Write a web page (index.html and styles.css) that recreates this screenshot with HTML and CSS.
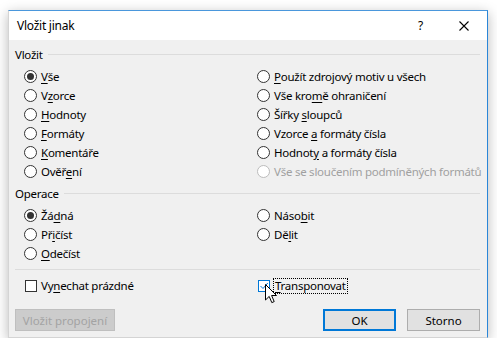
FILE: index.html
```html
<!DOCTYPE html>
<html lang="cs">
<head>
    <meta charset="UTF-8">
    <title>Vložit jinak</title>
    <link rel="stylesheet" href="styles.css">
</head>
<body>
<div class="dialog">
    <div class="titlebar">
        <span class="title">Vložit jinak</span>
        <span class="help">?</span>
        <svg class="close" width="10" height="10" viewBox="0 0 10 10">
            <path d="M0.5 0.5 L9.5 9.5 M9.5 0.5 L0.5 9.5" stroke="#000" stroke-width="1.1" fill="none"/>
        </svg>
    </div>

    <div class="body">
        <div class="group-title">Vložit</div>
        <div class="options paste">
            <label class="opt"><span class="radio on"></span><span><u>V</u>še</span></label>
            <label class="opt"><span class="radio"></span><span>V<u>z</u>orce</span></label>
            <label class="opt"><span class="radio"></span><span><u>H</u>odnoty</span></label>
            <label class="opt"><span class="radio"></span><span><u>F</u>ormáty</span></label>
            <label class="opt"><span class="radio"></span><span><u>K</u>omentáře</span></label>
            <label class="opt"><span class="radio"></span><span>Ověř<u>e</u>ní</span></label>
            <label class="opt"><span class="radio"></span><span><u>P</u>oužít zdrojový motiv u všech</span></label>
            <label class="opt"><span class="radio"></span><span>Vše kro<u>m</u>ě ohraničení</span></label>
            <label class="opt"><span class="radio"></span><span>Šířky <u>s</u>loupců</span></label>
            <label class="opt"><span class="radio"></span><span>Vzorce <u>a</u> formáty čísla</span></label>
            <label class="opt"><span class="radio"></span><span>Hodnot<u>y</u> a formáty čísla</span></label>
            <label class="opt disabled"><span class="radio"></span><span>Vše se sloučením podmíněných formátů</span></label>
        </div>

        <div class="group-title second">Operace</div>
        <div class="options ops">
            <label class="opt"><span class="radio on"></span><span>Žá<u>d</u>ná</span></label>
            <label class="opt"><span class="radio"></span><span>Př<u>i</u>číst</span></label>
            <label class="opt"><span class="radio"></span><span><u>O</u>dečíst</span></label>
            <label class="opt"><span class="radio"></span><span>Náso<u>b</u>it</span></label>
            <label class="opt"><span class="radio"></span><span>Dě<u>l</u>it</span></label>
        </div>

        <div class="separator"></div>

        <div class="options checks">
            <label class="opt"><span class="check"></span><span>Vy<u>n</u>echat prázdné</span></label>
            <label class="opt focused">
                <span class="check on">
                    <svg width="10" height="10" viewBox="0 0 10 10">
                        <path d="M1.5 5 L4 7.5 L8.8 2" stroke="#0078d7" stroke-width="1" fill="none"/>
                    </svg>
                </span>
                <span class="focus"><u>T</u>ransponovat</span>
                <svg class="cursor" width="13" height="20" viewBox="0 0 13 20">
                    <path d="M0.5 0.5 L0.5 16 L4.2 12.4 L6.8 18.6 L9.2 17.6 L6.6 11.5 L11.5 11.5 Z" fill="#fff" stroke="#000" stroke-width="1"/>
                </svg>
            </label>
        </div>

        <div class="buttons">
            <button class="btn link" disabled>Vložit propojení</button>
            <button class="btn default">OK</button>
            <button class="btn">Storno</button>
        </div>
    </div>
</div>
</body>
</html>
```

FILE: styles.css
```css
body {
    margin: 0;
    background: #fff;
    font-family: "Noto Sans", sans-serif;
    font-size: 11.5px;
    letter-spacing: -0.25px;
    color: #000;
}

.dialog {
    width: 480px;
    margin: 10px 0 0 8px;
    box-sizing: border-box;
    background: #f0f0f0;
    border: 1px solid #d4d4d4;
    border-top-color: #4a97dc;
    border-right-color: #2a86d8;
    box-shadow: 0 3px 12px rgba(0, 0, 0, 0.28);
}

.titlebar {
    height: 29px;
    background: #fff;
    display: flex;
    align-items: center;
    padding: 0 18px 0 8px;
    font-size: 12px;
}

.titlebar .title {
    flex: 1;
}

.titlebar .help {
    margin-right: 36px;
}

.body {
    padding: 7px 7px 6px 6px;
}

/* group headings with a rule */
.group-title {
    display: flex;
    align-items: center;
    gap: 5px;
    height: 15px;
    line-height: 15px;
}

.group-title::after {
    content: "";
    flex: 1;
    border-top: 1px solid #dcdcdc;
}

.group-title.second {
    margin-top: 5.5px;
}

.options {
    display: grid;
    grid-template-columns: 233px 1fr;
    grid-auto-flow: column;
    margin-left: 9px;
}

.paste {
    grid-template-rows: repeat(6, 19px);
    margin-top: 4.5px;
}

.ops {
    grid-template-rows: repeat(3, 19px);
    margin-top: 4.5px;
}

.checks {
    grid-template-rows: 19px;
    margin-top: 6px;
}

.separator {
    margin-top: 6.5px;
    border-top: 1px solid #dcdcdc;
}

.opt {
    display: flex;
    align-items: center;
    gap: 4px;
    white-space: nowrap;
    position: relative;
}

.opt u {
    text-underline-offset: 2px;
}

.radio {
    width: 13px;
    height: 13px;
    box-sizing: border-box;
    border: 1px solid #333;
    border-radius: 50%;
    background: #fff;
    display: flex;
    align-items: center;
    justify-content: center;
    flex: none;
}

.radio.on::after {
    content: "";
    width: 7px;
    height: 7px;
    border-radius: 50%;
    background: #333;
}

.opt.disabled {
    color: #a0a0a0;
}

.opt.disabled .radio {
    border-color: #bcbcbc;
}

.check {
    width: 12px;
    height: 12px;
    box-sizing: border-box;
    border: 1px solid #333;
    background: #fff;
    margin-left: 1px;
    flex: none;
    display: flex;
    align-items: center;
    justify-content: center;
}

.check.on {
    border-color: #0078d7;
}

.focused {
    gap: 3px;
}

.focus {
    border: 1px dotted #000;
    padding: 0 1px;
    line-height: 14px;
}

.cursor {
    position: absolute;
    left: 8px;
    top: 8px;
}

.buttons {
    display: flex;
    gap: 11px;
    margin-top: 14px;
}

.btn {
    width: 73px;
    height: 22px;
    box-sizing: border-box;
    padding: 0;
    border: 1px solid #adadad;
    background: #e1e1e1;
    font: inherit;
    color: #000;
}

.btn.link {
    width: 100px;
    margin-right: auto;
    background: #cccccc;
    border-color: #bfbfbf;
    color: #a3a3a3;
}

.btn.default {
    border: 2px solid #0078d7;
}
```
